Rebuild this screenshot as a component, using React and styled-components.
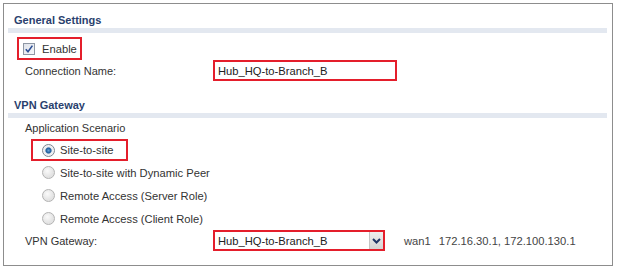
import React from 'react';
import styled, { createGlobalStyle } from 'styled-components';

const GlobalStyle = createGlobalStyle`
    body {
        margin: 0;
        background-color: #FFFFFF;
        font-family: 'Liberation Sans', Arial, sans-serif;
    }
`

const scenarios = [
    { label: "Site-to-site", checked: true, marked: true },
    { label: "Site-to-site with Dynamic Peer" },
    { label: "Remote Access (Server Role)" },
    { label: "Remote Access (Client Role)" },
];

export default function App () {
    return (
        <>
            <GlobalStyle />
            <Frame>
                <SectionTitle>General Settings</SectionTitle>
                <Marked $marked $left={13} $right={3} $height={23} $pad={4}>
                    <Checkbox>
                        <svg width="10" height="10" viewBox="0 0 10 10">
                            <path d="M1.8 5.2 L4 7.8 L8.4 1.6" fill="none" stroke="#2c4f95" strokeWidth="1.6" />
                        </svg>
                    </Checkbox>
                    <Label>Enable</Label>
                </Marked>
                <FieldRow>
                    <FieldLabel>Connection Name:</FieldLabel>
                    <TextBox>Hub_HQ-to-Branch_B</TextBox>
                </FieldRow>

                <SectionTitle $gap>VPN Gateway</SectionTitle>
                <SubHeading>Application Scenario</SubHeading>
                {scenarios.map((s) => (
                    <Marked key={s.label} $marked={s.marked} $left={27} $right={13} $height={s.marked ? 22 : 23} $pad={9}>
                        <Radio $checked={s.checked} />
                        <Label>{s.label}</Label>
                    </Marked>
                ))}
                <FieldRow>
                    <FieldLabel>VPN Gateway:</FieldLabel>
                    <SelectBox>
                        <SelectValue>Hub_HQ-to-Branch_B</SelectValue>
                        <DropButton>
                            <svg width="9" height="6" viewBox="0 0 9 6">
                                <path d="M1 1 L4.5 4.5 L8 1" fill="none" stroke="#1f3566" strokeWidth="2" />
                            </svg>
                        </DropButton>
                    </SelectBox>
                    <Info>wan1</Info>
                    <Info $wide>172.16.30.1, 172.100.130.1</Info>
                </FieldRow>
            </Frame>
        </>
    )
}

const Frame = styled.div`
    margin: 3px 0 0 3px;
    width: 608px;
    height: 261px;
    border: 1px solid #8d8d8d;
    display: flex;
    flex-direction: column;
    align-items: flex-start;
    font-size: 11px;
    color: #333333;
`
const SectionTitle = styled.div`
    align-self: stretch;
    margin: ${(p) => (p.$gap ? "16px" : "8px")} 5px 0 4px;
    padding-left: 6px;
    height: 16px;
    line-height: 16px;
    font-weight: 700;
    font-size: 11px;
    color: #2a3f6e;
    border-bottom: 5px solid #e3e8f0;
`
const Marked = styled.div`
    display: flex;
    align-items: center;
    box-sizing: border-box;
    height: ${(p) => p.$height}px;
    margin-left: ${(p) => p.$left}px;
    margin-top: ${(p) => (p.$pad === 4 ? "4px" : "0")};
    padding: 0 ${(p) => p.$right}px 0 ${(p) => p.$pad}px;
    border: 2px solid ${(p) => (p.$marked ? "#e41e2b" : "transparent")};
`
const Checkbox = styled.span`
    width: 10px;
    height: 10px;
    border: 1px solid #8e97a4;
    background: linear-gradient(135deg, #dfe3ea, #f4f6f9);
    display: flex;
    align-items: center;
    justify-content: center;
    margin-right: 7px;
`
const Radio = styled.span`
    width: 11px;
    height: 11px;
    border-radius: 50%;
    border: 1px solid ${(p) => (p.$checked ? "#7d8590" : "#b3b3b3")};
    background: ${(p) => (p.$checked
        ? "radial-gradient(circle, #6aa3d6 0, #1d5b9a 2.5px, #e8eaee 3.6px, #f6f7f9 6px)"
        : "radial-gradient(circle at 40% 35%, #fafafa 0, #e3e3e3 6px)")};
    margin-right: 5px;
`
const Label = styled.span`
    color: #333333;
    font-size: 11.2px;
    line-height: 14px;
`
const FieldRow = styled.div`
    display: flex;
    align-items: center;
    height: 21px;
    margin-left: 21px;
`
const FieldLabel = styled.span`
    width: 188px;
    color: #333333;
`
const TextBox = styled.div`
    box-sizing: border-box;
    width: 184px;
    height: 21px;
    border: 2px solid #e41e2b;
    padding-left: 3px;
    display: flex;
    align-items: center;
    color: #222222;
    font-size: 11.2px;
    white-space: nowrap;
`
const SelectBox = styled(TextBox)`
    width: 172px;
    padding-right: 0;
`
const SelectValue = styled.span`
    flex: 1;
`
const DropButton = styled.span`
    flex: none;
    width: 13px;
    height: 17px;
    background: linear-gradient(#eeeeee, #d4d4d4);
    border-left: 1px solid #c4c4c4;
    display: flex;
    align-items: center;
    justify-content: center;
`
const Info = styled.span`
    margin-left: ${(p) => (p.$wide ? "8px" : "19px")};
    color: #444444;
    font-size: 11.2px;
`
const SubHeading = styled.div`
    height: 21px;
    line-height: 21px;
    margin-left: 21px;
    color: #333333;
`
